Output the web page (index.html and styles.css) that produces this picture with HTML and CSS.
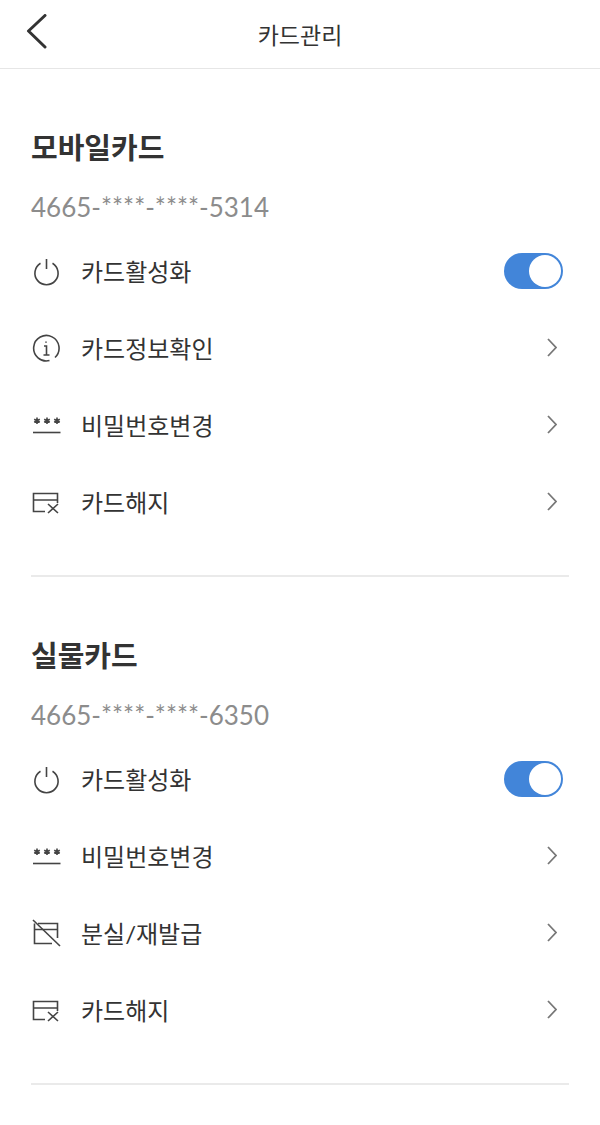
FILE: index.html
```html
<!DOCTYPE html>
<html lang="ko">
<head>
    <meta charset="UTF-8">
    <title>카드관리</title>
    <link rel="stylesheet" href="styles.css">
</head>
<body>
    <svg class="icon-defs" aria-hidden="true">
        <symbol id="icon-power" viewBox="0 0 30 30">
            <path d="M9.5 7.2A11.6 11.6 0 1 0 21.5 7.2M15.5 3V13"/>
        </symbol>
        <symbol id="icon-info" viewBox="0 0 30 30">
            <path d="M18.5 27.5A12.7 12.7 0 1 1 24 24.5"/>
            <path d="M13 13H15.5V22M12.5 22H18.5M15 8.5V9.7"/>
        </symbol>
        <symbol id="icon-stars" viewBox="0 0 30 30">
            <path d="M6 7.5V14M3.2 9.2L8.8 12.3M8.8 9.2L3.2 12.3M16 7.5V14M13.2 9.2L18.8 12.3M18.8 9.2L13.2 12.3M26 7.5V14M23.2 9.2L28.8 12.3M28.8 9.2L23.2 12.3"/>
            <path d="M2 22.5H29.5"/>
        </symbol>
        <symbol id="icon-cancel" viewBox="0 0 30 30">
            <path d="M14 24.5H2.5V6.5H26.5V16M2.5 13H26.5"/>
            <path d="M17 17L27 26M27 17L17 26"/>
        </symbol>
        <symbol id="icon-lost" viewBox="0 0 30 30">
            <path d="M7 5.5H26.5V20M21 25.5H3.5V5.5M3.5 11.5H26.5"/>
            <path d="M2 2L29 28"/>
        </symbol>
    </svg>

    <header class="top-bar">
        <svg class="back-icon" viewBox="0 0 24 36"><path d="M20 1.5L3.5 17L20 33"/></svg>
        <h1>카드관리</h1>
    </header>

    <section class="card-section">
        <h2>모바일카드</h2>
        <p class="card-number">4665-****-****-5314</p>
        <ul class="menu">
            <li><svg class="menu-icon"><use href="#icon-power"/></svg><span>카드활성화</span><div class="toggle"><i></i></div></li>
            <li><svg class="menu-icon"><use href="#icon-info"/></svg><span>카드정보확인</span><svg class="chevron" viewBox="0 0 10 20"><path d="M1 1L9 9.5L1 18"/></svg></li>
            <li><svg class="menu-icon"><use href="#icon-stars"/></svg><span>비밀번호변경</span><svg class="chevron" viewBox="0 0 10 20"><path d="M1 1L9 9.5L1 18"/></svg></li>
            <li><svg class="menu-icon"><use href="#icon-cancel"/></svg><span>카드해지</span><svg class="chevron" viewBox="0 0 10 20"><path d="M1 1L9 9.5L1 18"/></svg></li>
        </ul>
    </section>

    <section class="card-section">
        <h2>실물카드</h2>
        <p class="card-number">4665-****-****-6350</p>
        <ul class="menu">
            <li><svg class="menu-icon"><use href="#icon-power"/></svg><span>카드활성화</span><div class="toggle"><i></i></div></li>
            <li><svg class="menu-icon"><use href="#icon-stars"/></svg><span>비밀번호변경</span><svg class="chevron" viewBox="0 0 10 20"><path d="M1 1L9 9.5L1 18"/></svg></li>
            <li><svg class="menu-icon"><use href="#icon-lost"/></svg><span>분실/재발급</span><svg class="chevron" viewBox="0 0 10 20"><path d="M1 1L9 9.5L1 18"/></svg></li>
            <li><svg class="menu-icon"><use href="#icon-cancel"/></svg><span>카드해지</span><svg class="chevron" viewBox="0 0 10 20"><path d="M1 1L9 9.5L1 18"/></svg></li>
        </ul>
    </section>
</body>
</html>
```

FILE: styles.css
```css
* {
    box-sizing: border-box;
}
body {
    margin: 0;
    background-color: #fff;
    color: #333;
    font-family: Lato, "Noto Sans CJK KR", sans-serif;
}
.icon-defs {
    display: none;
}

/* Top bar */
.top-bar {
    display: flex;
    justify-content: center;
    align-items: center;
    position: relative;
    height: 69px;
    border-bottom: 1px solid #e6e6e6;
}
.top-bar h1 {
    margin: 0;
    font-size: 23px;
    font-weight: 400;
}
.back-icon {
    position: absolute;
    left: 25px;
    top: 14px;
    width: 24px;
    height: 36px;
    fill: none;
    stroke: #333;
    stroke-width: 3;
    stroke-linecap: round;
    stroke-linejoin: round;
}

/* Card sections */
.card-section {
    margin: 0 31px;
    padding: 59px 0 35px;
    border-bottom: 2px solid #eaeaea;
}
.card-section h2 {
    margin: 0;
    height: 40px;
    line-height: 40px;
    font-size: 29px;
    font-weight: 700;
}
.card-number {
    margin: 19px 0 5px;
    height: 40px;
    line-height: 40px;
    font-size: 26px;
    color: #8c8c8c;
}
.menu {
    margin: 0;
    padding: 0;
    list-style: none;
}
.menu li {
    display: flex;
    align-items: center;
    height: 77px;
    font-size: 24px;
}
.menu li span {
    flex: 1;
    margin-left: 20px;
}
.menu-icon {
    width: 30px;
    height: 30px;
    fill: none;
    stroke: #444;
    stroke-width: 1.6;
}
.chevron {
    width: 10px;
    height: 20px;
    margin-right: 12px;
    fill: none;
    stroke: #777;
    stroke-width: 1.8;
}

/* Toggle */
.toggle {
    display: flex;
    justify-content: flex-end;
    align-items: center;
    width: 59px;
    height: 36px;
    margin-right: 6px;
    padding-right: 2px;
    border-radius: 18px;
    background-color: #4285d9;
}
.toggle i {
    width: 32px;
    height: 32px;
    border-radius: 50%;
    background-color: #fff;
}
```
